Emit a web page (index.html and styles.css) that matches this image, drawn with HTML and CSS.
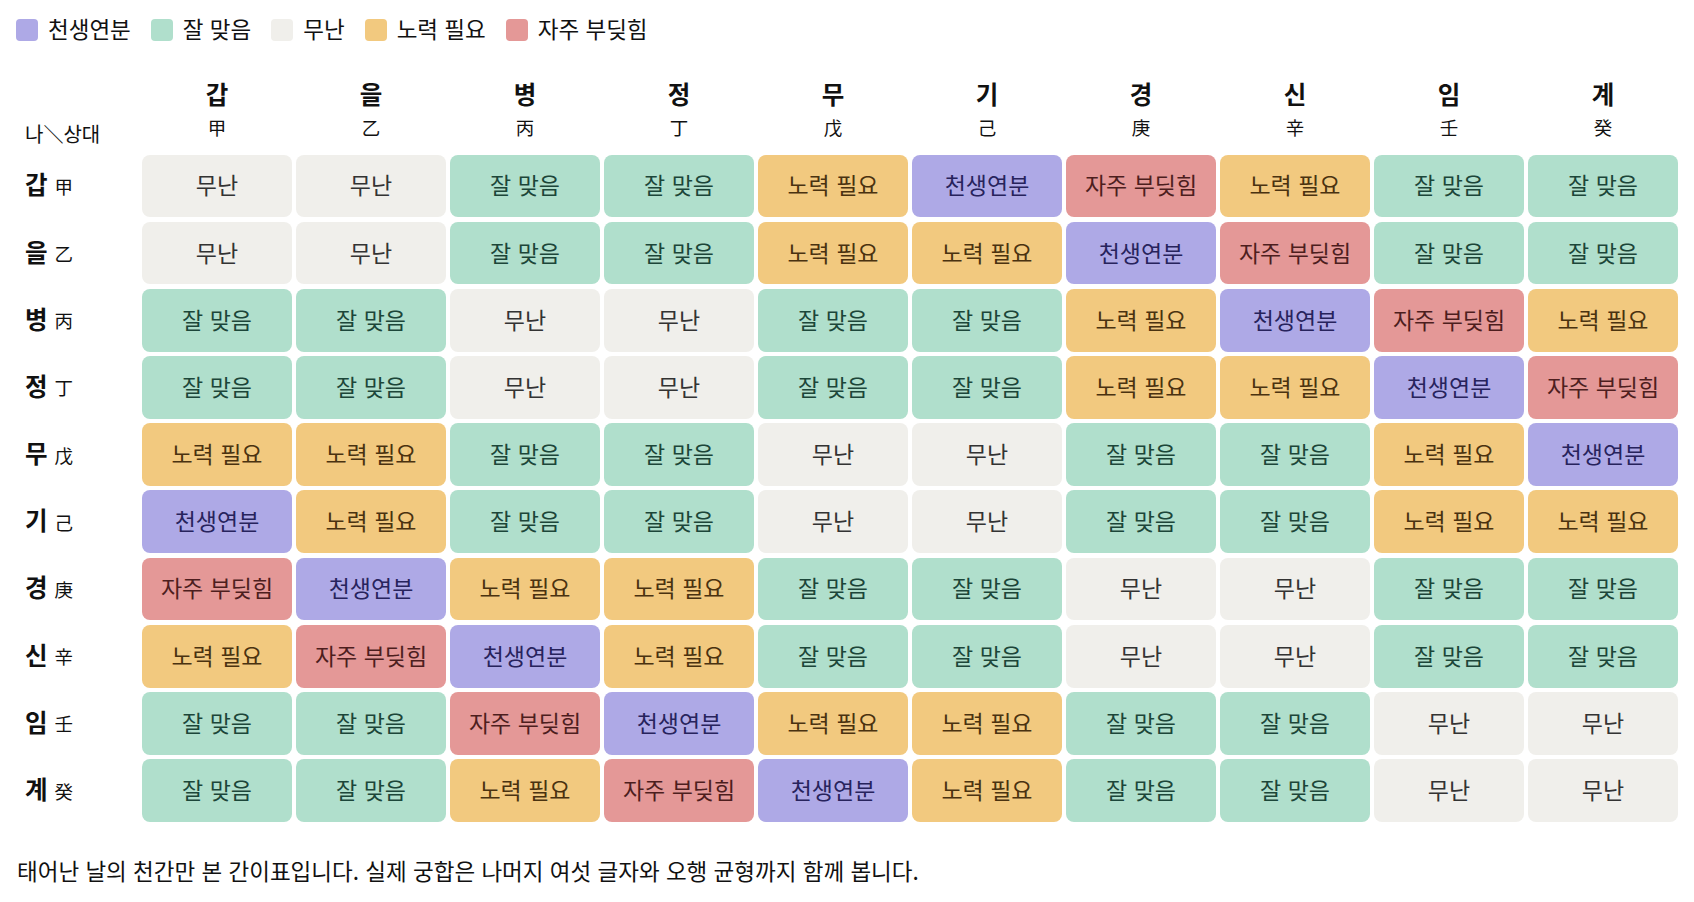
FILE: index.html
```html
<!DOCTYPE html>
<html lang="ko">
<head>
<meta charset="utf-8">
<title>천간 궁합표</title>
<link rel="stylesheet" href="styles.css">
</head>
<body>
<div class="legend">
  <span class="legend-item"><i class="sw c"></i>천생연분</span>
  <span class="legend-item"><i class="sw g"></i>잘 맞음</span>
  <span class="legend-item"><i class="sw m"></i>무난</span>
  <span class="legend-item"><i class="sw n"></i>노력 필요</span>
  <span class="legend-item"><i class="sw j"></i>자주 부딪힘</span>
</div>

<div class="table">
  <div class="corner">나＼상대</div>
  <div class="colh"><b>갑</b><span>甲</span></div>
  <div class="colh"><b>을</b><span>乙</span></div>
  <div class="colh"><b>병</b><span>丙</span></div>
  <div class="colh"><b>정</b><span>丁</span></div>
  <div class="colh"><b>무</b><span>戊</span></div>
  <div class="colh"><b>기</b><span>己</span></div>
  <div class="colh"><b>경</b><span>庚</span></div>
  <div class="colh"><b>신</b><span>辛</span></div>
  <div class="colh"><b>임</b><span>壬</span></div>
  <div class="colh"><b>계</b><span>癸</span></div>

  <div class="rowh"><b>갑</b><span>甲</span></div>
  <div class="cell m">무난</div><div class="cell m">무난</div><div class="cell g">잘 맞음</div><div class="cell g">잘 맞음</div><div class="cell n">노력 필요</div><div class="cell c">천생연분</div><div class="cell j">자주 부딪힘</div><div class="cell n">노력 필요</div><div class="cell g">잘 맞음</div><div class="cell g">잘 맞음</div>

  <div class="rowh"><b>을</b><span>乙</span></div>
  <div class="cell m">무난</div><div class="cell m">무난</div><div class="cell g">잘 맞음</div><div class="cell g">잘 맞음</div><div class="cell n">노력 필요</div><div class="cell n">노력 필요</div><div class="cell c">천생연분</div><div class="cell j">자주 부딪힘</div><div class="cell g">잘 맞음</div><div class="cell g">잘 맞음</div>

  <div class="rowh"><b>병</b><span>丙</span></div>
  <div class="cell g">잘 맞음</div><div class="cell g">잘 맞음</div><div class="cell m">무난</div><div class="cell m">무난</div><div class="cell g">잘 맞음</div><div class="cell g">잘 맞음</div><div class="cell n">노력 필요</div><div class="cell c">천생연분</div><div class="cell j">자주 부딪힘</div><div class="cell n">노력 필요</div>

  <div class="rowh"><b>정</b><span>丁</span></div>
  <div class="cell g">잘 맞음</div><div class="cell g">잘 맞음</div><div class="cell m">무난</div><div class="cell m">무난</div><div class="cell g">잘 맞음</div><div class="cell g">잘 맞음</div><div class="cell n">노력 필요</div><div class="cell n">노력 필요</div><div class="cell c">천생연분</div><div class="cell j">자주 부딪힘</div>

  <div class="rowh"><b>무</b><span>戊</span></div>
  <div class="cell n">노력 필요</div><div class="cell n">노력 필요</div><div class="cell g">잘 맞음</div><div class="cell g">잘 맞음</div><div class="cell m">무난</div><div class="cell m">무난</div><div class="cell g">잘 맞음</div><div class="cell g">잘 맞음</div><div class="cell n">노력 필요</div><div class="cell c">천생연분</div>

  <div class="rowh"><b>기</b><span>己</span></div>
  <div class="cell c">천생연분</div><div class="cell n">노력 필요</div><div class="cell g">잘 맞음</div><div class="cell g">잘 맞음</div><div class="cell m">무난</div><div class="cell m">무난</div><div class="cell g">잘 맞음</div><div class="cell g">잘 맞음</div><div class="cell n">노력 필요</div><div class="cell n">노력 필요</div>

  <div class="rowh"><b>경</b><span>庚</span></div>
  <div class="cell j">자주 부딪힘</div><div class="cell c">천생연분</div><div class="cell n">노력 필요</div><div class="cell n">노력 필요</div><div class="cell g">잘 맞음</div><div class="cell g">잘 맞음</div><div class="cell m">무난</div><div class="cell m">무난</div><div class="cell g">잘 맞음</div><div class="cell g">잘 맞음</div>

  <div class="rowh"><b>신</b><span>辛</span></div>
  <div class="cell n">노력 필요</div><div class="cell j">자주 부딪힘</div><div class="cell c">천생연분</div><div class="cell n">노력 필요</div><div class="cell g">잘 맞음</div><div class="cell g">잘 맞음</div><div class="cell m">무난</div><div class="cell m">무난</div><div class="cell g">잘 맞음</div><div class="cell g">잘 맞음</div>

  <div class="rowh"><b>임</b><span>壬</span></div>
  <div class="cell g">잘 맞음</div><div class="cell g">잘 맞음</div><div class="cell j">자주 부딪힘</div><div class="cell c">천생연분</div><div class="cell n">노력 필요</div><div class="cell n">노력 필요</div><div class="cell g">잘 맞음</div><div class="cell g">잘 맞음</div><div class="cell m">무난</div><div class="cell m">무난</div>

  <div class="rowh"><b>계</b><span>癸</span></div>
  <div class="cell g">잘 맞음</div><div class="cell g">잘 맞음</div><div class="cell n">노력 필요</div><div class="cell j">자주 부딪힘</div><div class="cell c">천생연분</div><div class="cell n">노력 필요</div><div class="cell g">잘 맞음</div><div class="cell g">잘 맞음</div><div class="cell m">무난</div><div class="cell m">무난</div>
</div>

<p class="note">태어난 날의 천간만 본 간이표입니다. 실제 궁합은 나머지 여섯 글자와 오행 균형까지 함께 봅니다.</p>
</body>
</html>
```

FILE: styles.css
```css
* { box-sizing: border-box; }

body {
  margin: 0;
  padding: 13px 16px;
  background: #ffffff;
  color: #111111;
  font-family: "Noto Sans CJK KR", "Noto Sans", sans-serif;
  font-size: 22.5px;
}

.legend {
  display: flex;
  align-items: center;
  gap: 20px;
  height: 30px;
}

.legend-item {
  display: flex;
  align-items: center;
  gap: 10px;
  line-height: 30px;
}

.sw {
  display: block;
  width: 22px;
  height: 22px;
  border-radius: 4px;
  margin-top: 4px;
}

.sw.c, .cell.c { background: #aea9e6; }
.sw.g, .cell.g { background: #b0dfcc; }
.sw.m, .cell.m { background: #f0efeb; }
.sw.n, .cell.n { background: #f2c97f; }
.sw.j, .cell.j { background: #e49897; }

.table {
  display: grid;
  grid-template-columns: 122px repeat(10, 150px);
  grid-template-rows: 80px repeat(10, 62.7px);
  column-gap: 4px;
  row-gap: 4.5px;
  margin-top: 27px;
}

.corner {
  display: flex;
  align-items: flex-end;
  padding-left: 9px;
  padding-bottom: 2px;
  font-size: 20px;
  line-height: 28px;
}

.colh {
  display: flex;
  flex-direction: column;
  align-items: center;
  justify-content: flex-end;
  padding-bottom: 10px;
}

.colh b {
  font-size: 24.5px;
  font-weight: 700;
  line-height: 30px;
  margin-bottom: 5px;
}

.colh span {
  font-size: 18.5px;
  line-height: 26px;
}

.rowh {
  display: flex;
  align-items: center;
  padding-left: 9px;
  padding-bottom: 4px;
  gap: 7px;
}

.rowh b {
  font-size: 24.5px;
  font-weight: 700;
}

.rowh span {
  font-size: 18.5px;
  margin-top: 4px;
}

.cell {
  display: flex;
  align-items: center;
  justify-content: center;
  border-radius: 8px;
  font-size: 23px;
  padding-bottom: 3px;
}

.cell.c { color: #27235c; }
.cell.g { color: #1c4639; }
.cell.m { color: #333333; }
.cell.n { color: #4a3210; }
.cell.j { color: #4d1e1e; }

.note {
  margin: 33px 0 0 1px;
  font-size: 22.5px;
  line-height: 30px;
}
```
